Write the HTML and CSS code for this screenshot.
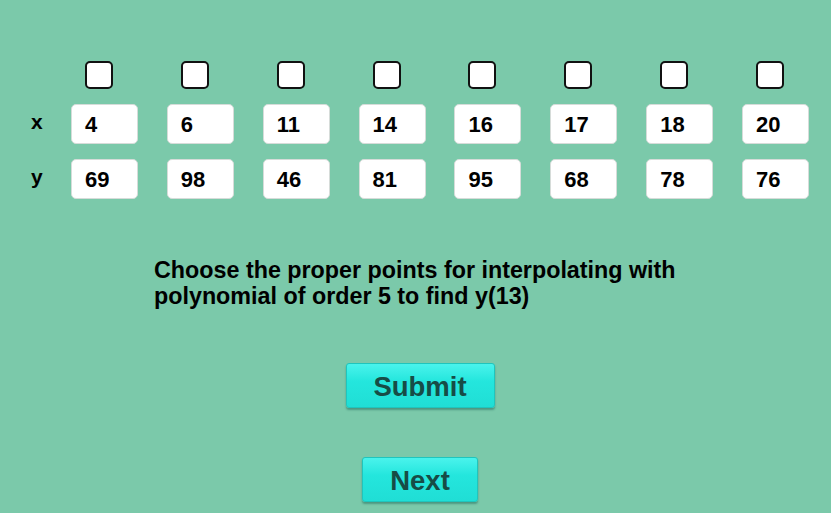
FILE: index.html
```html
<!DOCTYPE html>
<html>
<head>
<meta charset="utf-8">
<link rel="stylesheet" href="styles.css">
</head>
<body>
<div class="page">
  <div class="grid">
    <div class="label"></div>
    <div class="cell"><span class="check"></span></div>
    <div class="cell"><span class="check"></span></div>
    <div class="cell"><span class="check"></span></div>
    <div class="cell"><span class="check"></span></div>
    <div class="cell"><span class="check"></span></div>
    <div class="cell"><span class="check"></span></div>
    <div class="cell"><span class="check"></span></div>
    <div class="cell"><span class="check"></span></div>

    <div class="label">x</div>
    <div class="box">4</div>
    <div class="box">6</div>
    <div class="box">11</div>
    <div class="box">14</div>
    <div class="box">16</div>
    <div class="box">17</div>
    <div class="box">18</div>
    <div class="box">20</div>

    <div class="label">y</div>
    <div class="box">69</div>
    <div class="box">98</div>
    <div class="box">46</div>
    <div class="box">81</div>
    <div class="box">95</div>
    <div class="box">68</div>
    <div class="box">78</div>
    <div class="box">76</div>
  </div>

  <p class="question">Choose the proper points for interpolating with<br>polynomial of order 5 to find y(13)</p>

  <div class="actions">
    <button class="btn submit">Submit</button>
    <button class="btn next">Next</button>
  </div>
</div>
</body>
</html>
```

FILE: styles.css
```css
html, body {
  margin: 0;
  padding: 0;
  background: #7bc9aa;
  width: 831px;
  height: 513px;
  overflow: hidden;
  font-family: "Liberation Sans", Arial, sans-serif;
}

.page {
  display: flex;
  flex-direction: column;
  padding-top: 61px;
}

.grid {
  display: grid;
  grid-template-columns: 40px repeat(8, 67px);
  grid-template-rows: 28px 40px 40px;
  column-gap: 28.86px;
  row-gap: 15px;
  padding-left: 31px;
  margin-left: -28.86px;
}

.grid > .label:first-child {
  visibility: hidden;
}

.label {
  font-weight: bold;
  font-size: 21px;
  color: #000;
  display: flex;
  align-items: center;
  padding-left: 28.86px;
  padding-bottom: 4px;
}

.cell {
  display: flex;
  padding-left: 14px;
}

.check {
  width: 24px;
  height: 24px;
  flex: none;
  border: 2.5px solid #111;
  border-radius: 5px;
  background: #fff;
}

.box {
  background: #fff;
  border: 1px solid #d6dcd9;
  border-radius: 5px;
  box-sizing: border-box;
  padding-left: 13px;
  padding-top: 1px;
  display: flex;
  align-items: center;
  font-weight: bold;
  font-size: 22px;
  color: #000;
}

.question {
  margin: 58px 0 0 154px;
  font-weight: bold;
  font-size: 23.3px;
  line-height: 26px;
  color: #000;
}

.actions {
  display: flex;
  flex-direction: column;
  align-items: center;
  padding-left: 9px;
  margin-top: 54px;
}

.btn {
  font-family: "Liberation Sans", Arial, sans-serif;
  font-weight: bold;
  font-size: 27.5px;
  color: #174c46;
  background: linear-gradient(#4af3ec, #24e6dd 40%, #20ded5);
  border: 1px solid #1fc5bd;
  border-radius: 3px;
  box-shadow: 0 2px 2px rgba(20, 90, 80, 0.45);
  padding: 2px 0 0;
  display: flex;
  align-items: center;
  justify-content: center;
}

.submit {
  width: 149px;
  height: 45px;
}

.next {
  width: 116px;
  height: 45px;
  margin-top: 49px;
}
```
